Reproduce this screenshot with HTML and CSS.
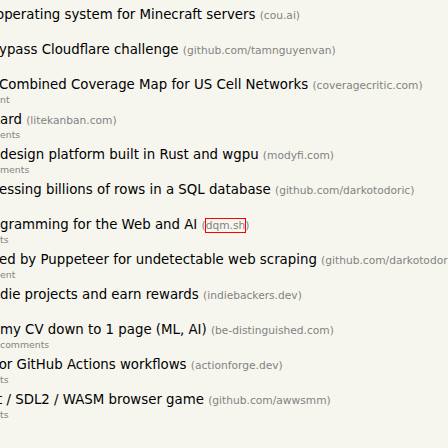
FILE: index.html
```html
<!DOCTYPE html>
<html>
<head>
<meta charset="utf-8">
<link rel="stylesheet" href="styles.css">
</head>
<body>
<main class="list">
  <div class="item">
    <div class="title"><span class="t c1">operating system for Minecraft servers</span> <span class="site">(<span class="sitestr">cou.ai</span>)</span></div>
    <div class="sub"></div>
  </div>
  <div class="item">
    <div class="title"><span class="t c2">ypass Cloudflare challenge</span> <span class="site">(<span class="sitestr">github.com/tamnguyenvan</span>)</span></div>
    <div class="sub"></div>
  </div>
  <div class="item">
    <div class="title"><span class="t c3">Combined Coverage Map for US Cell Networks</span> <span class="site">(<span class="sitestr">coveragecritic.com</span>)</span></div>
    <div class="sub">nt</div>
  </div>
  <div class="item">
    <div class="title"><span class="t c4">ard</span> <span class="site">(<span class="sitestr">litekanban.com</span>)</span></div>
    <div class="sub">ents</div>
  </div>
  <div class="item">
    <div class="title"><span class="t c5">design platform built in Rust and wgpu</span> <span class="site">(<span class="sitestr">modyfi.com</span>)</span></div>
    <div class="sub">ments</div>
  </div>
  <div class="item">
    <div class="title"><span class="t c6">essing billions of rows in a SQL database</span> <span class="site">(<span class="sitestr">github.com/darkotodoric</span>)</span></div>
    <div class="sub"></div>
  </div>
  <div class="item">
    <div class="title"><span class="t c7">gramming for the Web and AI</span> <span class="site">(<span class="sitestr marked">dqm.sh</span>)</span></div>
    <div class="sub">ts</div>
  </div>
  <div class="item">
    <div class="title"><span class="t c8">ed by Puppeteer for undetectable web scraping</span> <span class="site">(<span class="sitestr">github.com/darkotodoric</span>)</span></div>
    <div class="sub">ent</div>
  </div>
  <div class="item">
    <div class="title"><span class="t c9">die projects and earn rewards</span> <span class="site">(<span class="sitestr">indiebackers.dev</span>)</span></div>
    <div class="sub"></div>
  </div>
  <div class="item">
    <div class="title"><span class="t c10">my CV down to 1 page (ML, AI)</span> <span class="site">(<span class="sitestr">be-distinguished.com</span>)</span></div>
    <div class="sub">comments</div>
  </div>
  <div class="item">
    <div class="title"><span class="t c11">for GitHub Actions workflows</span> <span class="site">(<span class="sitestr">actionforge.dev</span>)</span></div>
    <div class="sub">ts</div>
  </div>
  <div class="item">
    <div class="title"><span class="t c12">t / SDL2 / WASM browser game</span> <span class="site">(<span class="sitestr">github.com/awwsmm</span>)</span></div>
    <div class="sub">ts</div>
  </div>
</main>
</body>
</html>
```
FILE: styles.css
```css
html, body {
  margin: 0;
  padding: 0;
  background: #f6f6ef;
  overflow: hidden;
}
body {
  width: 448px;
  height: 448px;
  font-family: "DejaVu Sans", Verdana, sans-serif;
}
.list {
  display: flex;
  flex-direction: column;
  padding-top: 7px;
}
.item {
  display: flex;
  flex-direction: column;
  padding-bottom: 6px;
}
.title {
  height: 17px;
  line-height: 16px;
  font-size: 13.33px;
  color: #000;
  white-space: nowrap;
}
.site {
  font-size: 10.67px;
  color: #828282;
}
.sitestr.marked {
  outline: 1px solid #ff0000;
  outline-offset: 0;
}
.sub {
  height: 12px;
  line-height: 12px;
  font-size: 9.33px;
  color: #828282;
  white-space: nowrap;
}
.t { display: inline-block; }
.c1 { margin-left: -4px; }
.c2 { margin-left: -1px; }
.c3 { margin-left: -1px; }
.c4 { margin-left: 0; }
.c5 { margin-left: 0; }
.c6 { margin-left: -1px; }
.c7 { margin-left: 0; }
.c8 { margin-left: -1px; }
.c9 { margin-left: 0; }
.c10 { margin-left: 0; }
.c11 { margin-left: -6px; }
.c12 { margin-left: -3px; }
```
